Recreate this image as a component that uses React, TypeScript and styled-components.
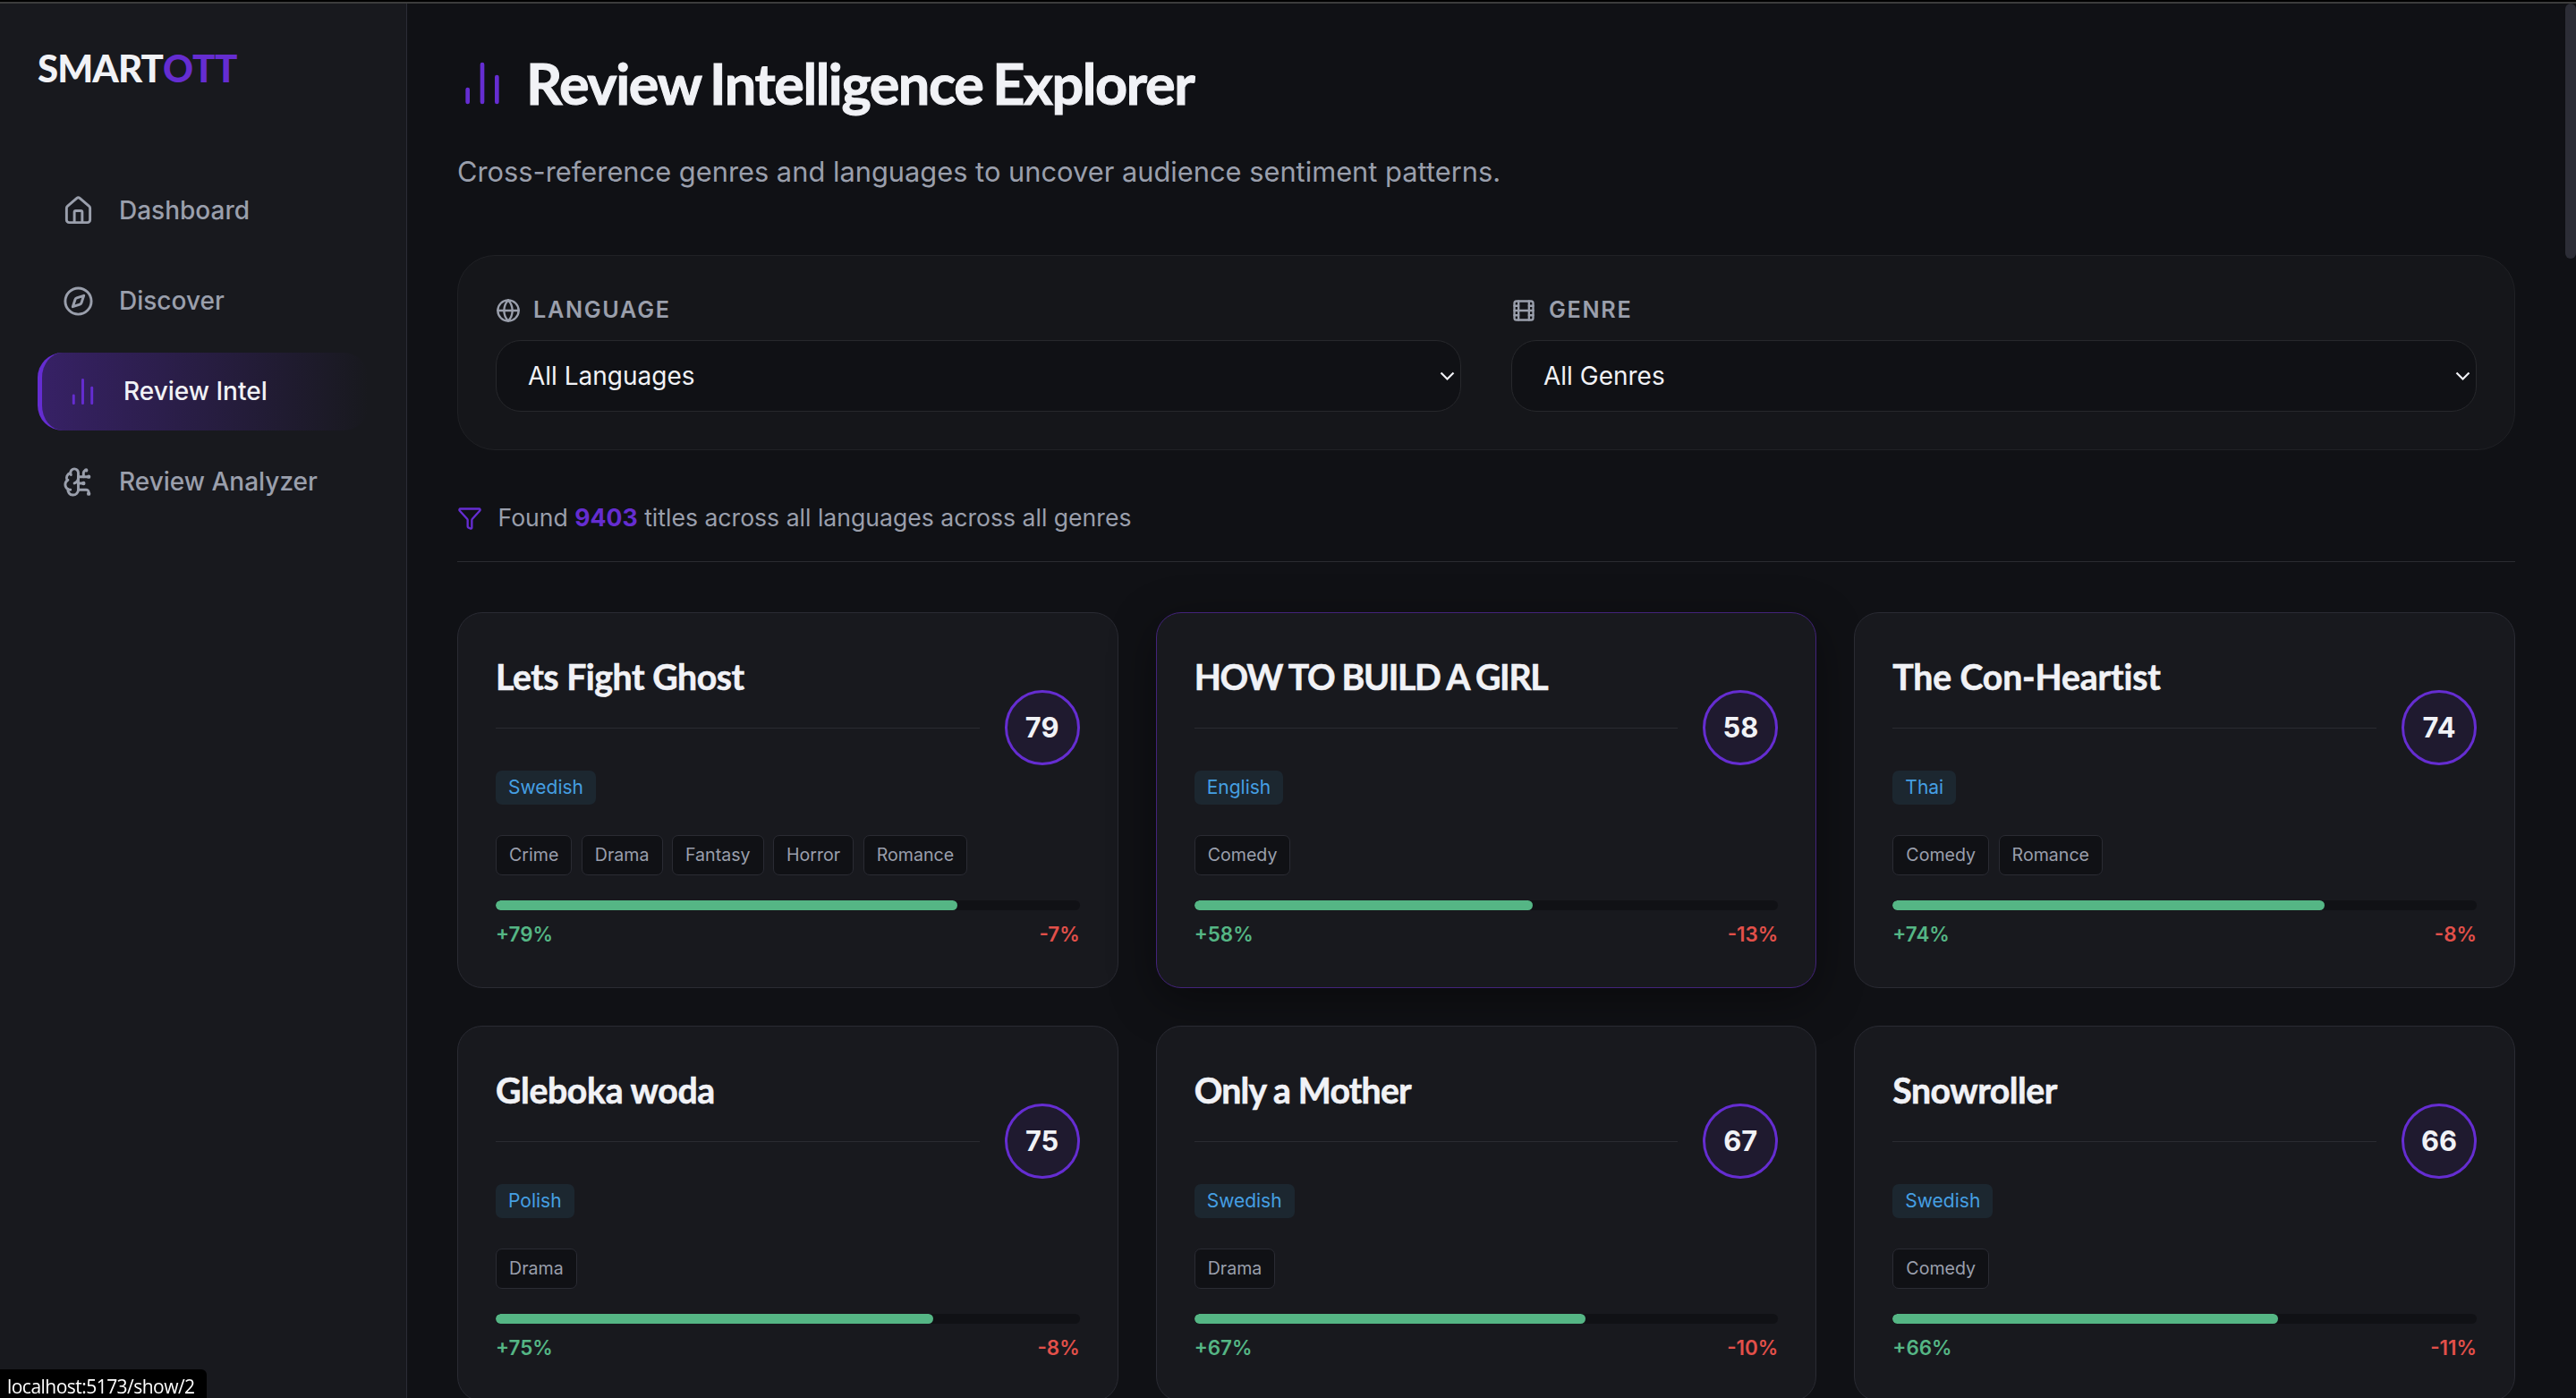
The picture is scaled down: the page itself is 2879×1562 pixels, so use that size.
import { FC } from 'react'
import styled, { createGlobalStyle, css } from 'styled-components'
import {
  BrainCircuit,
  ChartNoAxesColumn,
  Compass,
  Film,
  Funnel,
  Globe,
  House,
  LucideIcon,
} from 'lucide-react'

const GlobalStyle = createGlobalStyle`
  * {
    box-sizing: border-box;
  }

  body {
    margin: 0;
    background: #101115;
    color: #f1f2f6;
    font-family: 'Inter', 'Liberation Sans', sans-serif;
    font-size: 28px;
    line-height: 1.6;
    overflow: hidden;
  }
`

const headingFont = css`
  font-family: 'Lato', 'Liberation Sans', sans-serif;
  font-weight: 700;
  color: #f1f2f6;
`

const Page = styled.div`
  display: flex;
  height: 1562px;
  overflow: hidden;
  border-top: 2px solid #000;
`

const Shell = styled.div`
  display: flex;
  flex: 1;
  min-width: 0;
  border-top: 2px solid #3c3c3c;
`

const Sidebar = styled.aside`
  flex: 0 0 455px;
  padding: 38px 42px;
  background: #18191e;
  border-right: 1px solid #2b2c35;
`

const Logo = styled.div`
  ${headingFont}
  font-size: 42px;
  font-weight: 900;
  line-height: 68px;
  letter-spacing: -0.9px;
  margin-bottom: 82px;

  span {
    color: #652dd1;
    letter-spacing: -0.3px;
  }
`

const Nav = styled.nav`
  display: flex;
  flex-direction: column;
  gap: 14px;
`

const NavItem = styled.a<{ $active?: boolean }>`
  display: flex;
  align-items: center;
  gap: 28px;
  height: 86.9px;
  padding: 0 28px;
  border-radius: 28px;
  color: #9a9fac;
  font-weight: 500;
  white-space: nowrap;

  ${({ $active }) =>
    $active &&
    css`
      color: #f1f2f6;
      border-left: 5px solid #652dd1;
      background: linear-gradient(
        90deg,
        rgba(101, 45, 209, 0.4),
        rgba(101, 45, 209, 0)
      );

      svg {
        color: #652dd1;
      }
    `}
`

const Main = styled.main`
  flex: 1;
  min-width: 0;
  padding: 38px 68px 0 56px;
`

const PageTitle = styled.h1`
  ${headingFont}
  display: flex;
  align-items: center;
  gap: 21px;
  margin: 0;
  font-size: 63px;
  line-height: 102px;
  letter-spacing: -1.45px;
  word-spacing: -3px;
  -webkit-text-stroke: 1px #f1f2f6;

  svg {
    color: #652dd1;
  }
`

const Subtitle = styled.p`
  margin: 23px 0 0;
  font-size: 30.8px;
  line-height: 50px;
  letter-spacing: 0.01px;
  color: #9a9fac;
`

const Filters = styled.section`
  display: grid;
  grid-template-columns: 1fr 1fr;
  gap: 56px;
  height: 218px;
  margin-top: 68px;
  padding: 42px;
  background: #15161a;
  border: 1px solid #202125;
  border-radius: 42px;
`

const FilterLabel = styled.div`
  display: flex;
  align-items: center;
  gap: 14px;
  height: 38px;
  margin-bottom: 14px;
  color: #9a9fac;
  font-size: 25.2px;
  font-weight: 600;
  line-height: 36px;
  letter-spacing: 1.7px;
  text-transform: uppercase;

  span {
    padding-bottom: 2px;
  }
`

const SelectBox = styled.div`
  display: flex;
  align-items: center;
  justify-content: space-between;
  height: 80px;
  padding: 0 6px 0 35px;
  background: #101115;
  border: 1px solid #27282c;
  border-radius: 28px;
`

const Summary = styled.div`
  display: flex;
  align-items: center;
  gap: 17.5px;
  height: 97px;
  margin: 28px 0 56px;
  border-bottom: 1px solid #2a2b31;
  color: #9a9fac;
  font-size: 26.6px;

  svg {
    color: #652dd1;
  }

  span {
    padding-bottom: 1px;
  }

  strong {
    color: #652dd1;
    font-weight: 700;
  }
`

const CardGrid = styled.div`
  display: grid;
  grid-template-columns: repeat(3, 1fr);
  gap: 42px;
`

const Card = styled.article<{ $hovered?: boolean }>`
  height: 420px;
  padding: 42px;
  background: #18191e;
  border: 1px solid ${({ $hovered }) => ($hovered ? '#43237b' : '#2a2b33')};
  border-radius: 28px;
  box-shadow: ${({ $hovered }) =>
    $hovered ? '0 14px 52px rgba(0, 0, 0, 0.4)' : 'none'};
`

const CardHeader = styled.div`
  display: flex;
  align-items: center;
  gap: 28px;
  height: 172px;
`

const CardInfo = styled.div`
  flex: 1;
  min-width: 0;
`

const CardTitle = styled.h3<{ $tracking: number }>`
  ${headingFont}
  height: 87px;
  margin: 0 0 47px;
  border-bottom: 1px solid #2a2b31;
  font-size: 39.2px;
  line-height: 57px;
  letter-spacing: ${({ $tracking }) => $tracking}px;
  white-space: nowrap;
  -webkit-text-stroke: 0.6px #f1f2f6;
`

const Language = styled.span`
  display: block;
  width: fit-content;
  height: 38px;
  padding: 0 14px;
  border-radius: 7px;
  background: #1c2730;
  color: #459fe3;
  font-size: 21px;
  line-height: 38px;
`

const Score = styled.div`
  display: flex;
  align-items: center;
  justify-content: center;
  width: 84px;
  height: 84px;
  border: 3px solid #652dd1;
  border-radius: 50%;
  background: #1f1a2f;
  font-size: 30.8px;
  font-weight: 700;
`

const Genres = styled.div`
  display: flex;
  gap: 10.5px;
  margin: 34px 0 28px;
`

const Genre = styled.span`
  height: 45px;
  padding: 0 14px;
  border: 1px solid #2a2b33;
  border-radius: 7px;
  background: #101115;
  color: #9a9fac;
  font-size: 19.6px;
  line-height: 43px;
`

const Track = styled.div`
  height: 11px;
  border-radius: 6px;
  background: #101115;
  overflow: hidden;
`

const Fill = styled.div`
  height: 100%;
  border-radius: 6px;
  background: #55b685;
`

const Sentiment = styled.div`
  display: flex;
  justify-content: space-between;
  margin-top: 9px;
  font-size: 22.4px;
  font-weight: 600;
  line-height: 36px;
`

const Positive = styled.span`
  color: #55b685;
`

const Negative = styled.span`
  color: #e2504a;
`

const ScrollThumb = styled.div`
  position: fixed;
  top: 4px;
  right: 0;
  width: 12px;
  height: 285px;
  border-radius: 6px;
  background: #2c2d36;
`

const LinkStatus = styled.div`
  position: fixed;
  left: 0;
  bottom: 0;
  width: 231px;
  height: 32px;
  padding-left: 8px;
  border-top-right-radius: 6px;
  background: #000;
  color: #fff;
  font-family: 'Open Sans', 'Noto Sans', sans-serif;
  font-size: 21px;
  letter-spacing: -0.53px;
  line-height: 38px;
  white-space: nowrap;
`

interface INavLink {
  label: string
  icon: LucideIcon
  active?: boolean
}

interface IShow {
  title: string
  tracking: number
  language: string
  genres: string[]
  positive: number
  negative: number
}

const links: INavLink[] = [
  { label: 'Dashboard', icon: House },
  { label: 'Discover', icon: Compass },
  { label: 'Review Intel', icon: ChartNoAxesColumn, active: true },
  { label: 'Review Analyzer', icon: BrainCircuit },
]

const filters = [
  { label: 'Language', value: 'All Languages', icon: Globe },
  { label: 'Genre', value: 'All Genres', icon: Film },
]

const shows: IShow[] = [
  {
    title: 'Lets Fight Ghost',
    tracking: -0.45,
    language: 'Swedish',
    genres: ['Crime', 'Drama', 'Fantasy', 'Horror', 'Romance'],
    positive: 79,
    negative: 7,
  },
  {
    title: 'HOW TO BUILD A GIRL',
    tracking: -1.35,
    language: 'English',
    genres: ['Comedy'],
    positive: 58,
    negative: 13,
  },
  {
    title: 'The Con-Heartist',
    tracking: -0.15,
    language: 'Thai',
    genres: ['Comedy', 'Romance'],
    positive: 74,
    negative: 8,
  },
  {
    title: 'Gleboka woda',
    tracking: -0.35,
    language: 'Polish',
    genres: ['Drama'],
    positive: 75,
    negative: 8,
  },
  {
    title: 'Only a Mother',
    tracking: -0.8,
    language: 'Swedish',
    genres: ['Drama'],
    positive: 67,
    negative: 10,
  },
  {
    title: 'Snowroller',
    tracking: -0.5,
    language: 'Swedish',
    genres: ['Comedy'],
    positive: 66,
    negative: 11,
  },
]

const SelectArrow: FC = () => (
  <svg width="17" height="11" viewBox="0 0 17 11" fill="none">
    <path d="M1.5 1.5L8.5 8.5L15.5 1.5" stroke="#f1f2f6" strokeWidth="2.2" />
  </svg>
)

const ShowCard: FC<{ show: IShow; hovered?: boolean }> = ({
  show,
  hovered,
}) => {
  const { title, tracking, language, genres, positive, negative } = show

  return (
    <Card $hovered={hovered}>
      <CardHeader>
        <CardInfo>
          <CardTitle $tracking={tracking}>{title}</CardTitle>
          <Language>{language}</Language>
        </CardInfo>
        <Score>{positive}</Score>
      </CardHeader>
      <Genres>
        {genres.map((genre) => (
          <Genre key={genre}>{genre}</Genre>
        ))}
      </Genres>
      <Track>
        <Fill style={{ width: `${positive}%` }} />
      </Track>
      <Sentiment>
        <Positive>+{positive}%</Positive>
        <Negative>-{negative}%</Negative>
      </Sentiment>
    </Card>
  )
}

const App: FC = () => {
  return (
    <>
      <GlobalStyle />
      <Page>
        <Shell>
          <Sidebar>
            <Logo>
              SMART<span>OTT</span>
            </Logo>
            <Nav>
              {links.map(({ label, icon: Icon, active }) => (
                <NavItem key={label} $active={active}>
                  <Icon size={35} />
                  {label}
                </NavItem>
              ))}
            </Nav>
          </Sidebar>
          <Main>
            <PageTitle>
              <ChartNoAxesColumn size={56} />
              Review Intelligence Explorer
            </PageTitle>
            <Subtitle>
              Cross-reference genres and languages to uncover audience sentiment
              patterns.
            </Subtitle>
            <Filters>
              {filters.map(({ label, value, icon: Icon }) => (
                <div key={label}>
                  <FilterLabel>
                    <Icon size={28} />
                    <span>{label}</span>
                  </FilterLabel>
                  <SelectBox>
                    {value}
                    <SelectArrow />
                  </SelectBox>
                </div>
              ))}
            </Filters>
            <Summary>
              <Funnel size={28} />
              <span>
                Found <strong>9403</strong> titles across all languages across
                all genres
              </span>
            </Summary>
            <CardGrid>
              {shows.map((show, index) => (
                <ShowCard key={show.title} show={show} hovered={index === 1} />
              ))}
            </CardGrid>
          </Main>
        </Shell>
      </Page>
      <ScrollThumb />
      <LinkStatus>localhost:5173/show/2</LinkStatus>
    </>
  )
}

export default App
